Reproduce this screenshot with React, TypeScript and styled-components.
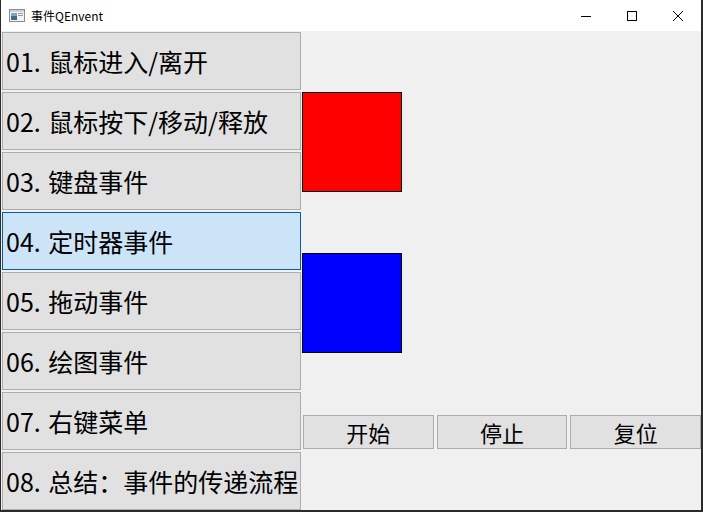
import styled, { createGlobalStyle } from 'styled-components';

const GlobalStyle = createGlobalStyle`
  html, body {
    margin: 0;
    padding: 0;
    background: #ffffff;
  }
  body {
    font-family: "Noto Sans CJK SC", "Noto Sans", sans-serif;
  }
`

const Window = styled.div`
  width: 703px;
  height: 512px;
  box-sizing: border-box;
  border-left: 1px solid #2b2b2b;
  border-right: 2px solid #2b2b2b;
  border-bottom: 2px solid #2b2b2b;
  display: flex;
  flex-direction: column;
  background: #f0f0f0;
  overflow: hidden;
`

const TitleBar = styled.div`
  height: 31px;
  flex: none;
  background: #ffffff;
  display: flex;
  align-items: center;
`

const AppIcon = styled.svg`
  margin-left: 8px;
  width: 16px;
  height: 13px;
`

const Title = styled.span`
  margin-left: 6px;
  font-size: 12px;
  line-height: 1;
  color: #000;
  flex: 1;
`

const Control = styled.div`
  width: 46px;
  height: 31px;
  display: flex;
  align-items: center;
  justify-content: center;
`

const Body = styled.div`
  flex: 1;
  display: flex;
`

const List = styled.div`
  width: 301px;
  display: flex;
  flex-direction: column;
`

const Item = styled.div<{ $active?: boolean }>`
  height: 58px;
  width: 299px;
  margin: 1px 0 1px 1px;
  box-sizing: border-box;
  border: 1px solid ${p => (p.$active ? '#0b5ca6' : '#adadad')};
  background: ${p => (p.$active ? '#cce4f7' : '#e1e1e1')};
  display: flex;
  align-items: center;
  padding-left: 3px;
  font-size: 25px;
  line-height: 1;
  word-spacing: 2px;
  color: #000;
  white-space: nowrap;
`

const Stage = styled.div`
  flex: 1;
  display: flex;
  flex-direction: column;
  align-items: flex-start;
  padding-top: 61px;
  gap: 61px;
`

const Square = styled.div<{ $color: string }>`
  width: 100px;
  height: 100px;
  box-sizing: border-box;
  border: 1px solid #000;
  background: ${p => p.$color};
`

const ButtonRow = styled.div`
  align-self: stretch;
  display: flex;
  gap: 3px;
  margin: 1px 0 0 1px;
`

const Button = styled.div`
  flex: 1;
  height: 34px;
  box-sizing: border-box;
  border: 1px solid #adadad;
  background: #e1e1e1;
  display: flex;
  align-items: center;
  justify-content: center;
  font-size: 22px;
  line-height: 1;
  color: #000;
`

const items = [
  '01. 鼠标进入/离开',
  '02. 鼠标按下/移动/释放',
  '03. 键盘事件',
  '04. 定时器事件',
  '05. 拖动事件',
  '06. 绘图事件',
  '07. 右键菜单',
  '08. 总结：事件的传递流程',
]

const App = () => {
  return (
    <>
      <GlobalStyle />
      <Window>
        <TitleBar>
          <AppIcon viewBox="0 0 16 13">
            <rect x="0.5" y="0.5" width="15" height="12" fill="#f4f4f4" stroke="#8a8a8a" />
            <rect x="1" y="1" width="14" height="2" fill="#c9d3dc" />
            <rect x="2" y="4" width="6" height="7" fill="#3f6b8a" />
            <rect x="2" y="4" width="6" height="3" fill="#7fa7c2" />
            <rect x="9" y="4" width="5" height="1" fill="#9a9a9a" />
            <rect x="9" y="6" width="5" height="1" fill="#9a9a9a" />
          </AppIcon>
          <Title>事件QEnvent</Title>
          <Control>
            <svg width="10" height="10" viewBox="0 0 10 10">
              <line x1="0" y1="5.5" x2="10" y2="5.5" stroke="#000" strokeWidth="1" />
            </svg>
          </Control>
          <Control>
            <svg width="10" height="10" viewBox="0 0 10 10">
              <rect x="0.5" y="0.5" width="9" height="9" fill="none" stroke="#000" strokeWidth="1" />
            </svg>
          </Control>
          <Control>
            <svg width="10" height="10" viewBox="0 0 10 10">
              <path d="M0 0 L10 10 M10 0 L0 10" stroke="#000" strokeWidth="1" />
            </svg>
          </Control>
        </TitleBar>
        <Body>
          <List>
            {items.map((text, i) => (
              <Item key={text} $active={i === 3}>{text}</Item>
            ))}
          </List>
          <Stage>
            <Square $color="#ff0000" />
            <Square $color="#0000ff" />
            <ButtonRow>
              <Button>开始</Button>
              <Button>停止</Button>
              <Button>复位</Button>
            </ButtonRow>
          </Stage>
        </Body>
      </Window>
    </>
  );
};

export default App;
